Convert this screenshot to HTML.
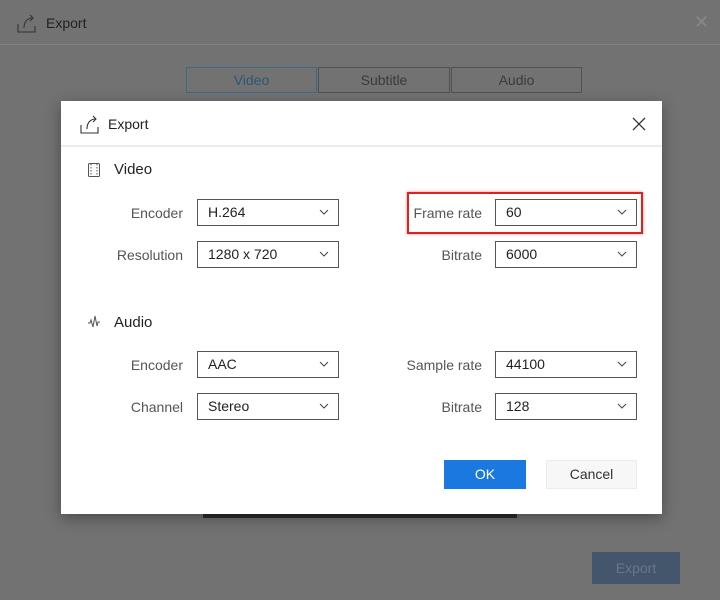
<!DOCTYPE html>
<html><head><style>
*{box-sizing:border-box;margin:0;padding:0}
body{width:720px;height:600px;background:#727272;font-family:"Liberation Sans",sans-serif;position:relative;overflow:hidden}
.abs{position:absolute}
.top{left:0;top:0;width:720px;height:45px;border-bottom:1px solid #808080}
.tab{top:67px;height:26px;border:1px solid #505050;color:#3a3a3a;font-size:14px;text-align:center;line-height:24px}
.dlg{left:61px;top:101px;width:601px;height:413px;background:#fff;box-shadow:0 4px 14px rgba(0,0,0,.35)}
.hdr{left:0;top:0;width:601px;height:46px;border-bottom:2px solid #ececec}
.lbl{font-size:14px;color:#555;text-align:right;width:100px}
.sel{width:142px;height:27px;border:1px solid #555;font-size:14px;color:#222;line-height:25px;padding-left:10px;background:#fff}
.sel svg{position:absolute;right:9px;top:9px}
.sec{font-size:15px;color:#222}
</style></head><body>
<div class="abs top"></div>
<svg class="abs" style="left:16px;top:12px" width="22" height="22" viewBox="0 0 22 22" fill="none" stroke="#333" stroke-width="1.1"><path d="M2 12v8h17v-6"/><path d="M8 16c0-6 3-10 9-10"/><path d="M14 3l3 3-3 3"/></svg>
<div class="abs" style="left:46px;top:15px;font-size:14px;color:#222">Export</div>
<div class="abs" style="left:694px;top:12px;font-size:18px;color:#888">✕</div>
<div class="abs tab" style="left:186px;width:131px;border-color:#3c6a8a;color:#2b5677">Video</div>
<div class="abs tab" style="left:318px;width:132px">Subtitle</div>
<div class="abs tab" style="left:451px;width:131px">Audio</div>
<div class="abs" style="left:203px;top:512px;width:314px;height:6px;background:#2a2a2a"></div>
<div class="abs" style="left:592px;top:552px;width:88px;height:32px;background:#43566b;color:#6b7684;font-size:14px;text-align:center;line-height:32px">Export</div>
<div class="abs dlg">
 <div class="abs hdr"></div>
 <svg class="abs" style="left:18px;top:12px" width="22" height="22" viewBox="0 0 22 22" fill="none" stroke="#333" stroke-width="1.1"><path d="M2 12v8h17v-6"/><path d="M8 16c0-6 3-10 9-10"/><path d="M14 3l3 3-3 3"/></svg>
 <div class="abs" style="left:47px;top:15px;font-size:14px;color:#222">Export</div>
 <svg class="abs" style="left:571px;top:16px" width="14" height="14" stroke="#333" stroke-width="1.3"><path d="M1 1L13 13M13 1L1 13"/></svg>
 <svg class="abs" style="left:26px;top:61px" width="14" height="16" fill="none" stroke="#555"><rect x="1.5" y="1.5" width="11" height="13" rx="1"/><path d="M4 2v12M10 2v12" stroke-dasharray="1.5 1.5"/></svg>
 <div class="abs sec" style="left:53px;top:60px">Video</div>
 <svg class="abs" style="left:26px;top:214px" width="16" height="14" fill="none" stroke="#555"><path d="M1 8h2l1-3 2 7 2-11 2 10 1-4h2"/></svg>
 <div class="abs sec" style="left:53px;top:213px">Audio</div>

 <div class="abs lbl" style="left:22px;top:104px">Encoder</div>
 <div class="abs sel" style="left:136px;top:98px">H.264<svg width="10" height="6"><path d="M1 1l4 4 4-4" fill="none" stroke="#444"/></svg></div>
 <div class="abs lbl" style="left:22px;top:146px">Resolution</div>
 <div class="abs sel" style="left:136px;top:140px">1280 x 720<svg width="10" height="6"><path d="M1 1l4 4 4-4" fill="none" stroke="#444"/></svg></div>
 <div class="abs" style="left:346px;top:91px;width:236px;height:42px;border:2px solid #e02020;box-shadow:0 0 3px rgba(224,32,32,.5)"></div>
 <div class="abs lbl" style="left:321px;top:104px">Frame rate</div>
 <div class="abs sel" style="left:434px;top:98px">60<svg width="10" height="6"><path d="M1 1l4 4 4-4" fill="none" stroke="#444"/></svg></div>
 <div class="abs lbl" style="left:321px;top:146px">Bitrate</div>
 <div class="abs sel" style="left:434px;top:140px">6000<svg width="10" height="6"><path d="M1 1l4 4 4-4" fill="none" stroke="#444"/></svg></div>

 <div class="abs lbl" style="left:22px;top:256px">Encoder</div>
 <div class="abs sel" style="left:136px;top:250px">AAC<svg width="10" height="6"><path d="M1 1l4 4 4-4" fill="none" stroke="#444"/></svg></div>
 <div class="abs lbl" style="left:22px;top:298px">Channel</div>
 <div class="abs sel" style="left:136px;top:292px">Stereo<svg width="10" height="6"><path d="M1 1l4 4 4-4" fill="none" stroke="#444"/></svg></div>
 <div class="abs lbl" style="left:321px;top:256px">Sample rate</div>
 <div class="abs sel" style="left:434px;top:250px">44100<svg width="10" height="6"><path d="M1 1l4 4 4-4" fill="none" stroke="#444"/></svg></div>
 <div class="abs lbl" style="left:321px;top:298px">Bitrate</div>
 <div class="abs sel" style="left:434px;top:292px">128<svg width="10" height="6"><path d="M1 1l4 4 4-4" fill="none" stroke="#444"/></svg></div>

 <div class="abs" style="left:383px;top:359px;width:82px;height:29px;background:#1a78e0;color:#fff;font-size:14px;text-align:center;line-height:29px">OK</div>
 <div class="abs" style="left:485px;top:359px;width:91px;height:29px;background:#f7f7f7;border:1px solid #ececec;color:#333;font-size:14px;text-align:center;line-height:27px">Cancel</div>
</div>
</body></html>
